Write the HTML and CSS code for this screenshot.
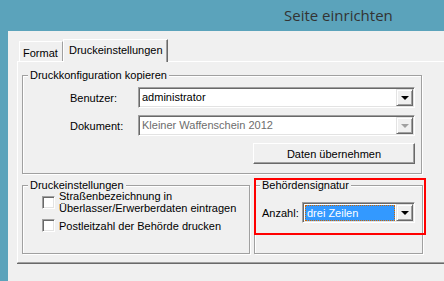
FILE: index.html
```html
<!DOCTYPE html>
<html lang="de">
<head>
<meta charset="UTF-8">
<title>Seite einrichten</title>
<link rel="stylesheet" href="styles.css">
</head>
<body>
<div class="window">
    <div class="titlebar">Seite einrichten</div>
    <div class="client">
        <div class="tabs">
            <div class="tab">Format</div>
            <div class="tab active">Druckeinstellungen</div>
        </div>
        <div class="panel">
            <fieldset class="group copy">
                <legend>Druckkonfiguration kopieren</legend>
                <div class="form-grid">
                    <label>Benutzer:</label>
                    <div class="combo">
                        <span class="value">administrator</span>
                        <span class="drop"><i class="arrow"></i></span>
                    </div>
                    <label>Dokument:</label>
                    <div class="combo disabled">
                        <span class="value">Kleiner Waffenschein 2012</span>
                        <span class="drop"><i class="arrow"></i></span>
                    </div>
                    <button class="btn">Daten übernehmen</button>
                </div>
            </fieldset>
            <div class="lower">
                <fieldset class="group print">
                    <legend>Druckeinstellungen</legend>
                    <div class="checks">
                        <div class="check">
                            <span class="box"></span>
                            <span class="text">Straßenbezeichnung in<br>Überlasser/Erwerberdaten eintragen</span>
                        </div>
                        <div class="check">
                            <span class="box"></span>
                            <span class="text">Postleitzahl der Behörde drucken</span>
                        </div>
                    </div>
                </fieldset>
                <div class="sig-wrap">
                    <fieldset class="group sig">
                        <legend>Behördensignatur</legend>
                        <div class="sig-row">
                            <label>Anzahl:</label>
                            <div class="combo small">
                                <span class="value selected">drei Zeilen</span>
                                <span class="drop"><i class="arrow"></i></span>
                            </div>
                        </div>
                    </fieldset>
                    <div class="highlight"></div>
                </div>
            </div>
        </div>
    </div>
</div>
</body>
</html>
```

FILE: styles.css
```css
body {
    margin: 0;
    font-family: "Liberation Sans", Arial, sans-serif;
    font-size: 11px;
    color: #000;
}
.window {
    width: 444px;
    height: 281px;
    background-color: #5ba3bb;
    display: flex;
    flex-direction: column;
    overflow: hidden;
}
.titlebar {
    height: 31px;
    line-height: 30px;
    padding-left: 284px;
    font-family: "Open Sans", sans-serif;
    font-size: 15px;
    color: #333;
}
.client {
    flex: 1;
    margin-left: 8px;
    padding: 8px 0 0 9px;
    background-color: #f0f0f0;
    overflow: hidden;
}
.tabs {
    display: flex;
    align-items: flex-end;
    height: 23px;
    padding-left: 2px;
    margin-bottom: -1px;
    position: relative;
    z-index: 1;
}
.tab {
    box-sizing: border-box;
    width: 44px;
    height: 20px;
    margin-bottom: 1px;
    padding: 5px 0 0 3px;
    border: 1px solid #fff;
    border-right-color: #a0a0a0;
    border-bottom: none;
}
.tab.active {
    width: 105px;
    height: 23px;
    margin-bottom: 0;
    padding: 4px 0 0 5px;
    background-color: #f0f0f0;
    border-right-color: #696969;
    box-shadow: inset -1px 0 #a0a0a0;
}
.panel {
    width: 460px;
    height: 202px;
    box-sizing: border-box;
    padding: 7px 0 0 4px;
    border: 1px solid #fff;
    border-right-color: #a0a0a0;
    border-bottom-color: #a0a0a0;
    box-shadow: 0 1px #696969;
}
.group {
    margin: 0;
    padding: 0;
    min-width: 0;
    box-sizing: border-box;
    border: 1px solid #a0a0a0;
    box-shadow: inset 1px 1px #fff, 1px 1px #fff;
}
.group legend {
    margin-left: 5px;
    padding: 0 2px;
    line-height: 13px;
    background-color: #f0f0f0;
}
.copy {
    width: 400px;
}
.form-grid {
    display: grid;
    grid-template-columns: 68px 277px;
    grid-auto-rows: 21px;
    row-gap: 7px;
    align-items: center;
    padding: 5px 6px 9px 47px;
}
.btn {
    grid-column: 2;
    justify-self: end;
    width: 162px;
    height: 21px;
    padding: 0;
    font: inherit;
    color: #000;
    background-color: #f0f0f0;
    border: 1px solid #fff;
    border-right-color: #696969;
    border-bottom-color: #696969;
    box-shadow: inset -1px -1px #a0a0a0;
}
.combo {
    display: flex;
    box-sizing: border-box;
    height: 21px;
    padding: 1px;
    background-color: #fff;
    border: 1px solid #a0a0a0;
    border-right-color: #fff;
    border-bottom-color: #fff;
    box-shadow: inset 1px 1px #696969, inset -1px -1px #e3e3e3;
}
.combo .value {
    flex: 1;
    padding-left: 2px;
    line-height: 17px;
    white-space: nowrap;
    overflow: hidden;
}
.combo.disabled .value {
    color: #6d6d6d;
}
.combo .value.selected {
    margin: 1px 1px 0 1px;
    padding-left: 1px;
    line-height: 14px;
    color: #fff;
    background-color: #3399ff;
    border: 1px dotted #cc6600;
}
.drop {
    width: 17px;
    height: 17px;
    box-sizing: border-box;
    display: flex;
    align-items: center;
    justify-content: center;
    background-color: #f0f0f0;
    border: 1px solid #e3e3e3;
    border-right-color: #696969;
    border-bottom-color: #696969;
    box-shadow: inset 1px 1px #fff, inset -1px -1px #a0a0a0;
}
.arrow {
    width: 0;
    height: 0;
    margin-top: 1px;
    border-left: 4px solid transparent;
    border-right: 4px solid transparent;
    border-top: 4px solid #000;
}
.combo.disabled .arrow {
    border-top-color: #a0a0a0;
}
.lower {
    display: flex;
    gap: 4px;
    margin-top: 5px;
}
.print {
    width: 228px;
    height: 75px;
}
.checks {
    display: flex;
    flex-direction: column;
    gap: 5px;
    margin-top: -2px;
    padding-left: 19px;
}
.check {
    display: flex;
    align-items: center;
    gap: 4px;
    line-height: 12px;
}
.box {
    width: 13px;
    height: 13px;
    box-sizing: border-box;
    background-color: #fff;
    border: 1px solid #a0a0a0;
    border-right-color: #fff;
    border-bottom-color: #fff;
    box-shadow: inset 1px 1px #696969, inset -1px -1px #e3e3e3;
    flex-shrink: 0;
}
.sig-wrap {
    position: relative;
}
.sig {
    width: 169px;
    height: 75px;
}
.sig-row {
    display: flex;
    align-items: center;
    padding: 10px 0 0 7px;
}
.sig-row label {
    width: 40px;
}
.combo.small {
    width: 113px;
}
.highlight {
    position: absolute;
    left: 0;
    top: -1px;
    width: 172px;
    height: 57px;
    box-sizing: border-box;
    border: 2px solid #ff0000;
}
```
